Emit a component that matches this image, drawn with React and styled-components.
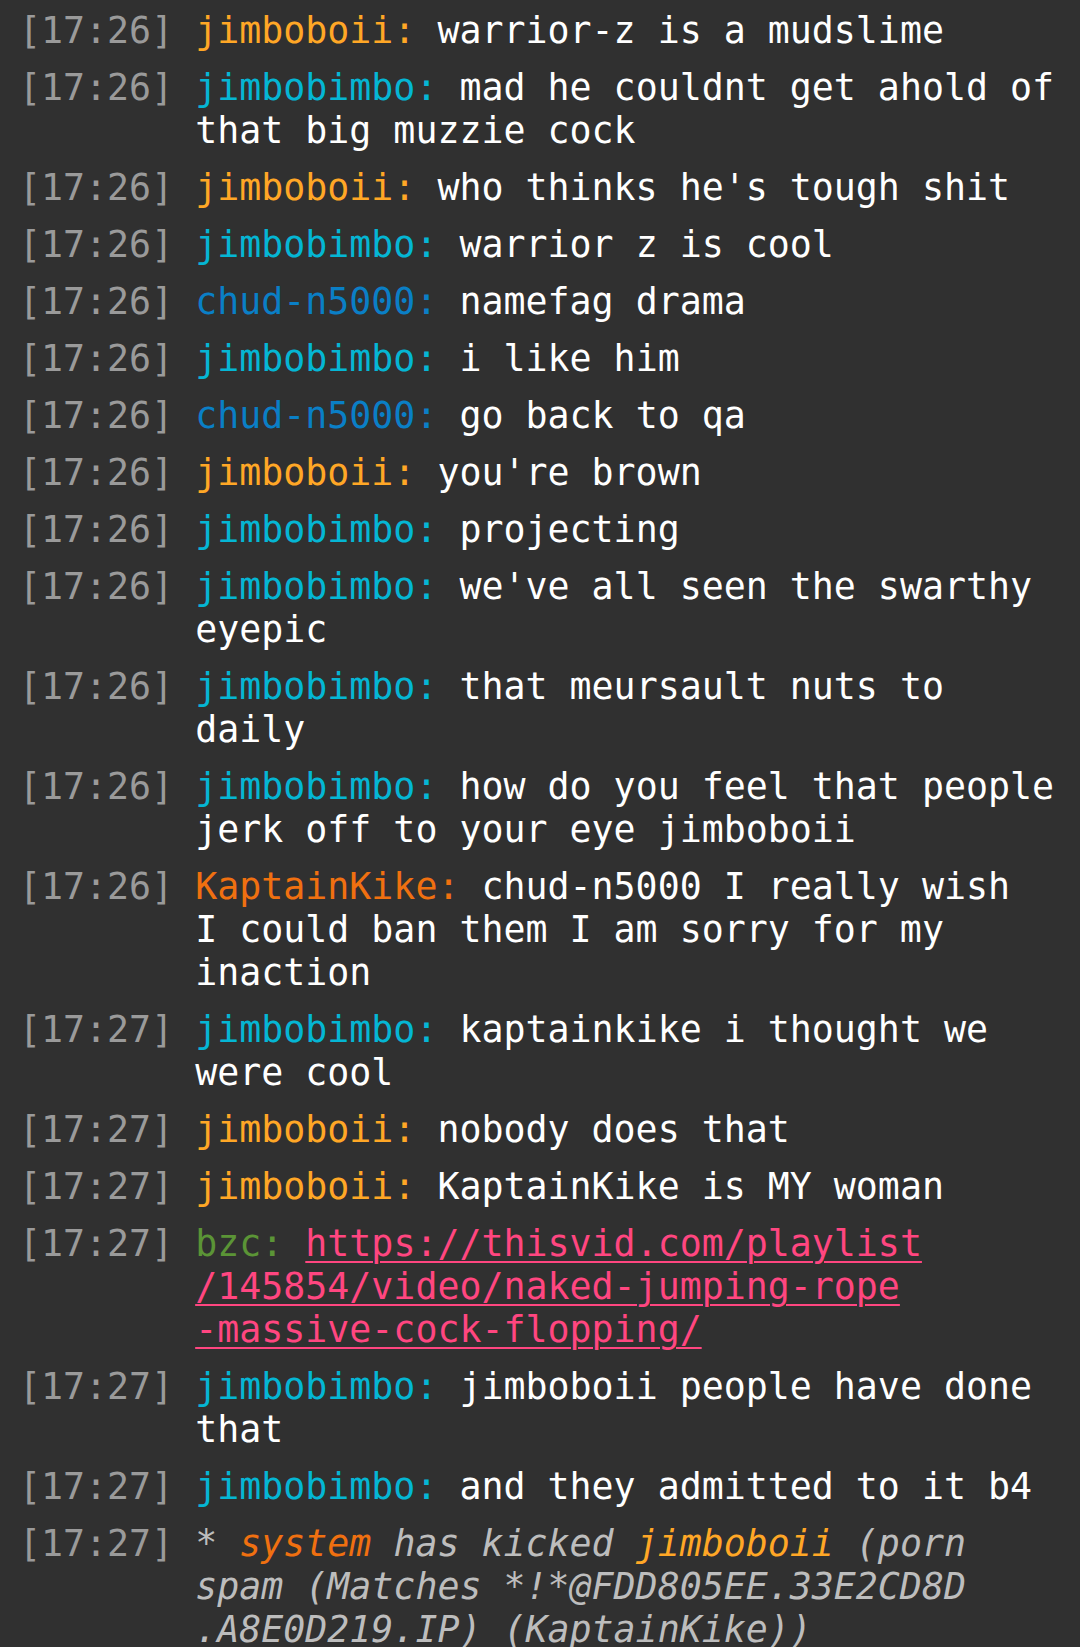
import React from 'react'
import styled, { createGlobalStyle } from 'styled-components'

const GlobalStyle = createGlobalStyle`
	html, body {
		margin: 0;
		background: #303030;
	}
`

const colors = {
	jimboboii: '#ffa726',
	jimbobimbo: '#05b6d4',
	'chud-n5000': '#0a7fc6',
	KaptainKike: '#f07010',
	bzc: '#5b9436',
	system: '#f07010'
}

const Log = styled.div`
	padding: 2px 12px 0 19px;
	font-family: 'DejaVu Sans Mono', 'Liberation Mono', monospace;
	font-size: 36.6px;
	line-height: 43px;
	color: #ffffff;
	min-height: 100vh;
	box-sizing: border-box;
	overflow: hidden;
`

const Row = styled.div`
	display: flex;
	padding: 7px 0;
`

const Time = styled.span`
	flex-shrink: 0;
	width: 8ch;
	color: #9a9a9a;
	white-space: pre;
`

const Body = styled.div`
	flex: 1;
	white-space: pre;
	font-style: ${props => (props.action ? 'italic' : 'normal')};
	color: ${props => (props.action ? '#bdbdbd' : '#ffffff')};
`

const Nick = styled.span`
	color: ${props => props.color};
`

const Link = styled.a`
	color: #ff4680;
	text-decoration: underline;
	text-decoration-thickness: 2px;
	text-underline-offset: 5px;
`

const messages = [
	{ time: '17:26', nick: 'jimboboii', lines: ['warrior-z is a mudslime'] },
	{ time: '17:26', nick: 'jimbobimbo', lines: ['mad he couldnt get ahold of', 'that big muzzie cock'] },
	{ time: '17:26', nick: 'jimboboii', lines: ["who thinks he's tough shit"] },
	{ time: '17:26', nick: 'jimbobimbo', lines: ['warrior z is cool'] },
	{ time: '17:26', nick: 'chud-n5000', lines: ['namefag drama'] },
	{ time: '17:26', nick: 'jimbobimbo', lines: ['i like him'] },
	{ time: '17:26', nick: 'chud-n5000', lines: ['go back to qa'] },
	{ time: '17:26', nick: 'jimboboii', lines: ["you're brown"] },
	{ time: '17:26', nick: 'jimbobimbo', lines: ['projecting'] },
	{ time: '17:26', nick: 'jimbobimbo', lines: ["we've all seen the swarthy", 'eyepic'] },
	{ time: '17:26', nick: 'jimbobimbo', lines: ['that meursault nuts to', 'daily'] },
	{ time: '17:26', nick: 'jimbobimbo', lines: ['how do you feel that people', 'jerk off to your eye jimboboii'] },
	{
		time: '17:26',
		nick: 'KaptainKike',
		lines: ['chud-n5000 I really wish', 'I could ban them I am sorry for my', 'inaction']
	},
	{ time: '17:27', nick: 'jimbobimbo', lines: ['kaptainkike i thought we', 'were cool'] },
	{ time: '17:27', nick: 'jimboboii', lines: ['nobody does that'] },
	{ time: '17:27', nick: 'jimboboii', lines: ['KaptainKike is MY woman'] },
	{
		time: '17:27',
		nick: 'bzc',
		link: true,
		lines: ['https://thisvid.com/playlist', '/145854/video/naked-jumping-rope', '-massive-cock-flopping/']
	},
	{ time: '17:27', nick: 'jimbobimbo', lines: ['jimboboii people have done', 'that'] },
	{ time: '17:27', nick: 'jimbobimbo', lines: ['and they admitted to it b4'] }
]

const Message = ({ nick, lines, link }) => (
	<Body>
		<Nick color={colors[nick]}>{nick}: </Nick>
		{lines.map((line, i) => (
			<React.Fragment key={i}>
				{i > 0 && <br />}
				{link ? <Link href="#">{line}</Link> : line}
			</React.Fragment>
		))}
	</Body>
)

const Kick = () => (
	<Body action>
		{'* '}
		<Nick color={colors.system}>system</Nick>
		{' has kicked '}
		<Nick color={colors.jimboboii}>jimboboii</Nick>
		{' (porn'}
		<br />
		{'spam (Matches *!*@FDD805EE.33E2CD8D'}
		<br />
		{'.A8E0D219.IP) (KaptainKike))'}
	</Body>
)

export default function App() {
	return (
		<>
			<GlobalStyle />
			<Log>
				{messages.map((m, i) => (
					<Row key={i}>
						<Time>[{m.time}] </Time>
						<Message {...m} />
					</Row>
				))}
				<Row>
					<Time>[17:27] </Time>
					<Kick />
				</Row>
			</Log>
		</>
	)
}
